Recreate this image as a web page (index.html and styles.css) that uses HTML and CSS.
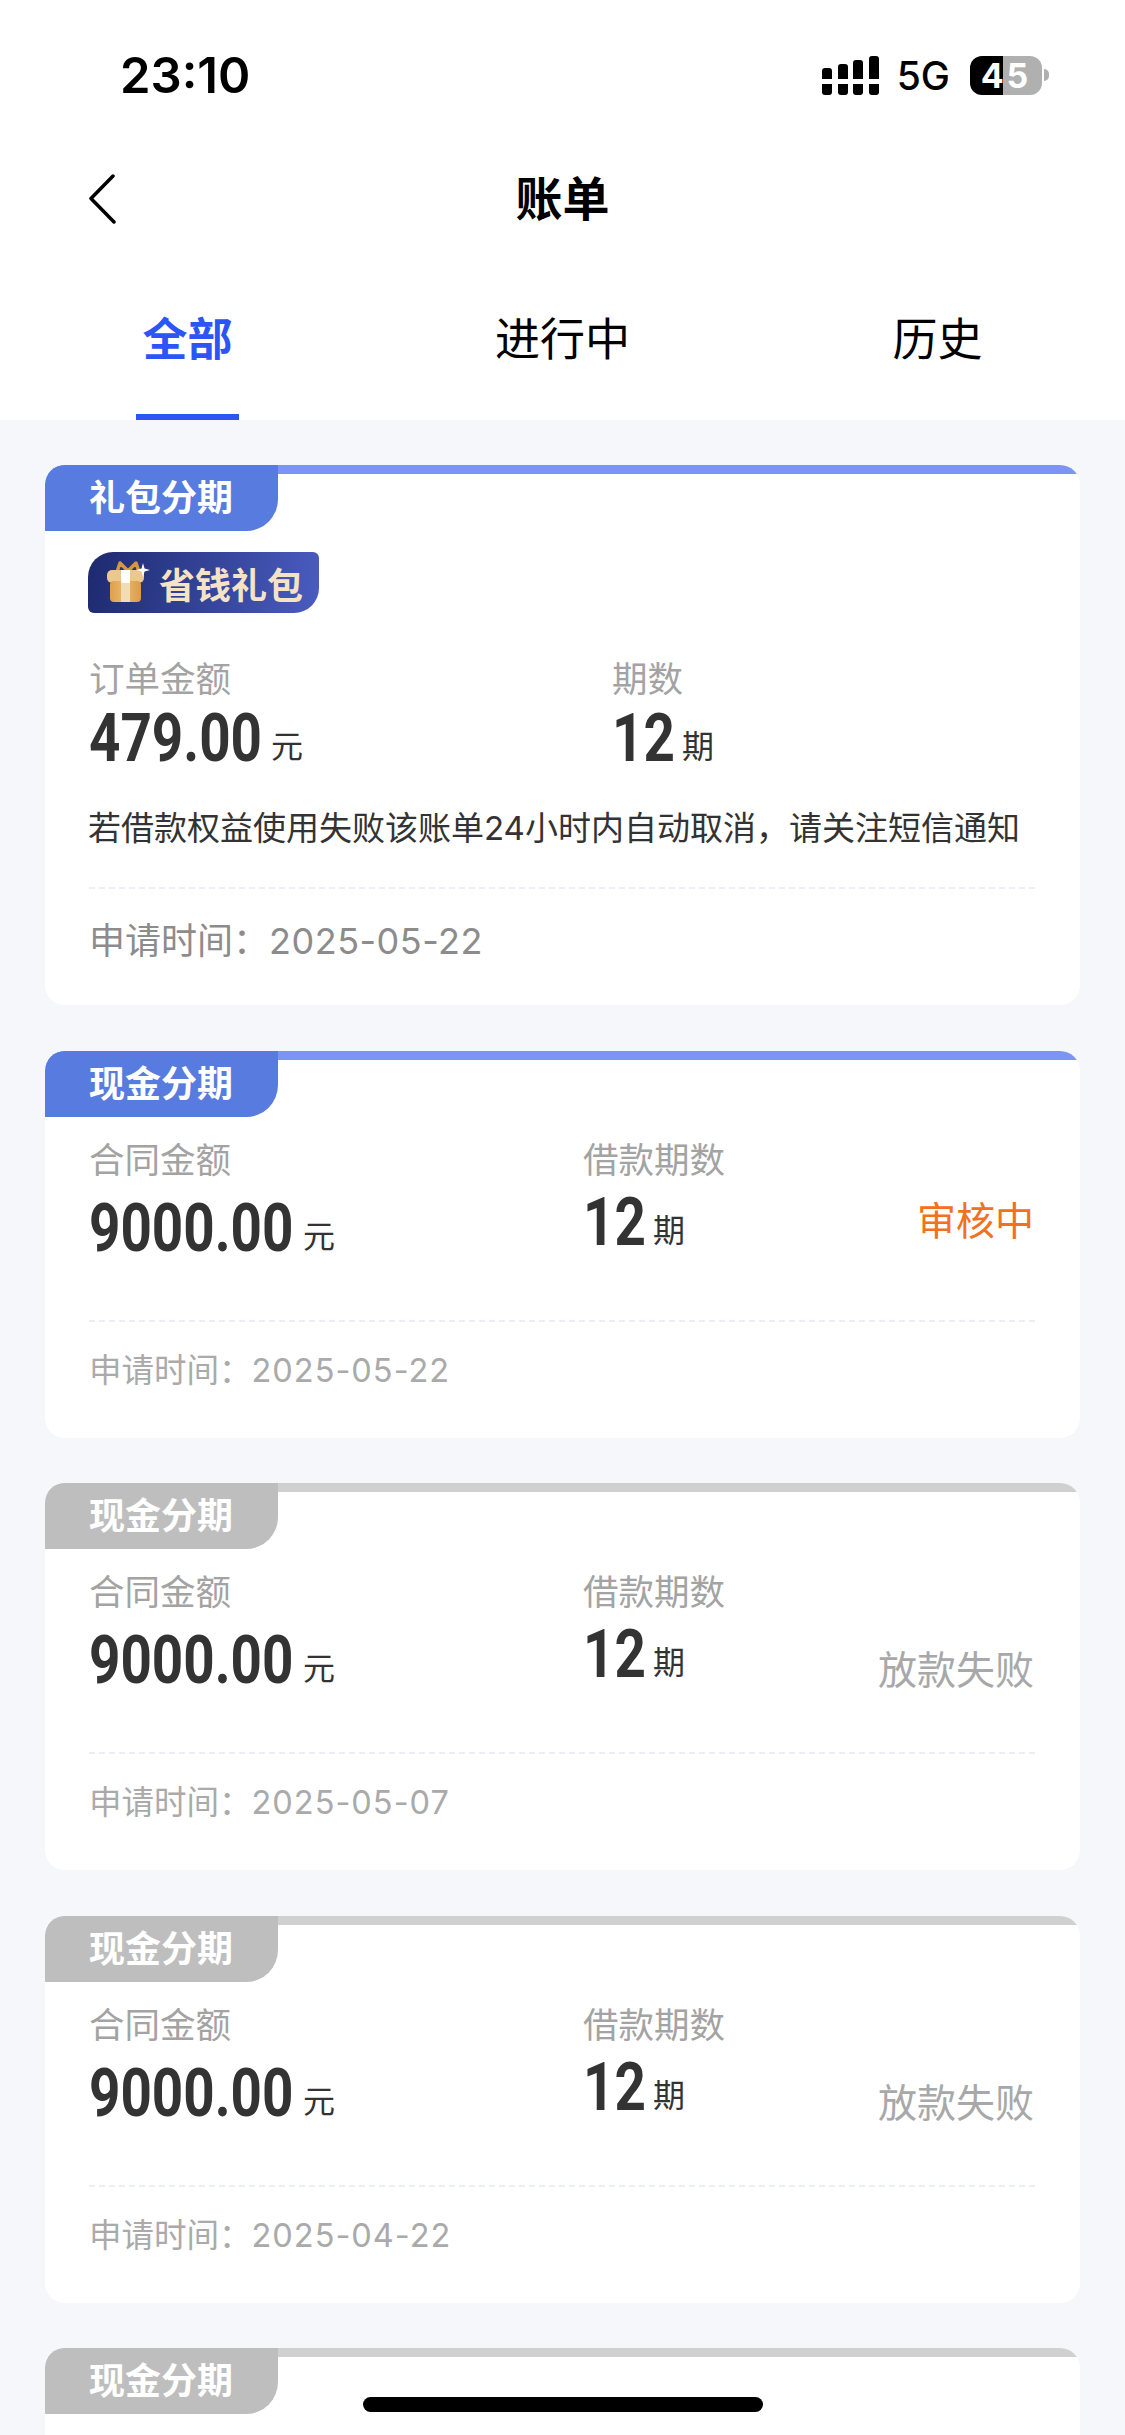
FILE: index.html
```html
<!doctype html>
<html lang="zh-CN">
<head>
	<meta charset="utf-8">
	<title>账单</title>
	<link rel="stylesheet" href="styles.css">
</head>
<body>
	<div class="page">
		<!-- status bar -->
		<div class="status_bar">
			<span class="time">23:10</span>
			<div class="status_right">
				<div class="signal">
					<span class="sig sig1"></span>
					<span class="sig sig2"></span>
					<span class="sig sig3"></span>
					<span class="sig sig4"></span>
				</div>
				<span class="net">5G</span>
				<div class="battery"><span>45</span></div>
				<i class="battery_nub"></i>
			</div>
		</div>

		<!-- title -->
		<div class="nav">
			<svg class="back" width="30" height="50" viewBox="0 0 30 50"><path d="M26 2 L4 24.500 L27 48" fill="none" stroke="#000" stroke-width="3.500" stroke-linecap="round" stroke-linejoin="round"/></svg>
			<span class="nav_title">账单</span>
		</div>

		<!-- tabs -->
		<div class="tabs">
			<div class="tab active"><span>全部</span></div>
			<div class="tab"><span>进行中</span></div>
			<div class="tab"><span>历史</span></div>
		</div>

		<div class="list">
			<!-- gift card -->
			<div class="card card_gift">
				<div class="tag">礼包分期</div>
				<div class="badge">
					<svg class="gift" width="46" height="44" viewBox="0 0 46 44">
						<defs>
							<linearGradient id="box" x1="0" x2="1" y1="0" y2="0">
								<stop offset="0" stop-color="#dfa04a"/>
								<stop offset="0.45" stop-color="#e9b86f"/>
								<stop offset="1" stop-color="#dc9c46"/>
							</linearGradient>
						</defs>
						<path d="M11 11 L14 2 L22 10 L30 2 L33 11" fill="none" stroke="#d9963c" stroke-width="3.500" stroke-linejoin="round"/>
						<rect x="1" y="9" width="37" height="13" rx="5" fill="#ecc88f"/>
						<rect x="4" y="20" width="31" height="21" rx="4" fill="url(#box)"/>
						<rect x="15" y="9" width="9" height="13" fill="#fff"/>
						<rect x="15" y="22" width="9" height="19" fill="#f3dcb4"/>
						<path d="M37 2 L38.500 7.500 L44 9 L38.500 10.500 L37 16 L35.500 10.500 L30 9 L35.500 7.500 Z" fill="#fff"/>
					</svg>
					<span>省钱礼包</span>
				</div>
				<div class="info info_gift">
					<div class="col_amount">
						<div class="label">订单金额</div>
						<div class="value short"><b>479.00</b><em>元</em></div>
					</div>
					<div class="col_term">
						<div class="label">期数</div>
						<div class="value term"><b>12</b><em>期</em></div>
					</div>
				</div>
				<div class="notice">若借款权益使用失败该账单24小时内自动取消，请关注短信通知</div>
				<div class="foot">申请时间：<span class="date">2025-05-22</span></div>
			</div>

			<div class="card">
				<div class="tag">现金分期</div>
				<div class="info">
					<div class="col_amount">
						<div class="label">合同金额</div>
						<div class="value"><b>9000.00</b><em>元</em></div>
					</div>
					<div class="col_term">
						<div class="label">借款期数</div>
						<div class="value term"><b>12</b><em>期</em></div>
					</div>
					<div class="state orange">审核中</div>
				</div>
				<div class="foot">申请时间：<span class="date">2025-05-22</span></div>
			</div>

			<div class="card grey">
				<div class="tag">现金分期</div>
				<div class="info">
					<div class="col_amount">
						<div class="label">合同金额</div>
						<div class="value"><b>9000.00</b><em>元</em></div>
					</div>
					<div class="col_term">
						<div class="label">借款期数</div>
						<div class="value term"><b>12</b><em>期</em></div>
					</div>
					<div class="state">放款失败</div>
				</div>
				<div class="foot">申请时间：<span class="date">2025-05-07</span></div>
			</div>

			<div class="card grey">
				<div class="tag">现金分期</div>
				<div class="info">
					<div class="col_amount">
						<div class="label">合同金额</div>
						<div class="value"><b>9000.00</b><em>元</em></div>
					</div>
					<div class="col_term">
						<div class="label">借款期数</div>
						<div class="value term"><b>12</b><em>期</em></div>
					</div>
					<div class="state">放款失败</div>
				</div>
				<div class="foot">申请时间：<span class="date">2025-04-22</span></div>
			</div>

			<div class="card grey">
				<div class="tag">现金分期</div>
			</div>
		</div>

		<div class="home_bar"></div>
	</div>
</body>
</html>
```

FILE: styles.css
```css
* {
	box-sizing: border-box;
}

html, body {
	margin: 0;
	padding: 0;
}

body {
	font-family: Inter, "Noto Sans CJK SC", sans-serif;
	background-color: #f6f7fb;
}

.page {
	position: relative;
	width: 1125px;
	height: 2435px;
	overflow: hidden;
}

/* status bar */
.status_bar {
	display: flex;
	justify-content: space-between;
	align-items: center;
	height: 150px;
	padding: 0 76px 0 120px;
	background-color: white;
}

.time {
	font-size: 49px;
	font-weight: 600;
	color: #000;
}

.status_right {
	display: flex;
	align-items: center;
}

.signal {
	display: flex;
	gap: 5.500px;
	margin-right: 18px;
}

.sig {
	display: block;
	width: 10px;
	height: 39px;
	border-radius: 3px;
	background: linear-gradient(#000, #000) bottom / 100% 11px no-repeat, linear-gradient(#000, #000) top / 100% 23px no-repeat;
}

.sig1 {
	height: 27px;
	margin-top: 12px;
	background-size: 100% 11px, 100% 11px;
}

.sig2 {
	height: 31px;
	margin-top: 8px;
	background-size: 100% 11px, 100% 15px;
}

.sig3 {
	height: 35px;
	margin-top: 4px;
	background-size: 100% 11px, 100% 19px;
}

.net {
	font-size: 39px;
	font-weight: 500;
	color: #000;
	margin-right: 20px;
}

.battery {
	width: 72px;
	height: 39px;
	border-radius: 12px;
	background: linear-gradient(90deg, #000 46%, #b0b0b0 46%);
	color: white;
	font-size: 34px;
	font-weight: 700;
	letter-spacing: 3px;
	line-height: 39px;
	text-align: center;
}

.battery_nub {
	display: block;
	width: 5px;
	height: 12px;
	margin-left: 2px;
	border-radius: 0 6px 6px 0;
	background-color: #b0b0b0;
}

/* title */
.nav {
	position: relative;
	height: 99px;
	background-color: white;
	text-align: center;
	line-height: 98px;
}

.nav_title {
	font-size: 47px;
	font-weight: 700;
	color: #000;
}

.back {
	position: absolute;
	left: 87px;
	top: 24px;
}

/* tabs */
.tabs {
	display: grid;
	grid-template-columns: repeat(3, 1fr);
	height: 171px;
	background-color: white;
	text-align: center;
}

.tab span {
	display: inline-block;
	height: 171px;
	padding: 58px 6px 0 6px;
	font-size: 45px;
	line-height: 66px;
	color: #000;
}

.tab.active span {
	color: #2d55f5;
	font-weight: 700;
	border-bottom: 6px solid #2d55f5;
}

/* cards */
.list {
	padding: 45px 45px 0 45px;
}

.card {
	--bar: #7e94f5;
	--tag: #577bdf;
	height: 387px;
	margin-bottom: 45.500px;
	padding-bottom: 1px;
	border-radius: 20px;
	background: linear-gradient(var(--bar) 9px, white 9px);
}

.card.grey {
	--bar: #d0d0d0;
	--tag: #bebebe;
}

.card_gift {
	height: 540px;
}

.tag {
	width: 233px;
	height: 66px;
	padding-left: 44px;
	border-radius: 20px 0 32px 0;
	background-color: var(--tag);
	color: white;
	font-size: 36px;
	font-weight: 700;
	line-height: 66px;
}

.badge {
	display: flex;
	align-items: center;
	gap: 7px;
	width: 231px;
	height: 61px;
	margin: 21px 0 0 43px;
	padding-left: 18px;
	border-radius: 25px 6px 25px 6px;
	background: linear-gradient(100deg, #1d2a6e, #4a5cc0);
	color: #f6e3c5;
	font-size: 36px;
	font-weight: 700;
}

.info {
	display: flex;
	align-items: flex-start;
	padding: 23px 46px 0 44px;
}

.info_gift {
	padding-top: 46px;
}

.col_amount {
	width: 494px;
}

.info_gift .col_amount {
	width: 523px;
}

.label {
	font-size: 35.500px;
	line-height: 42px;
	color: #a3a3a3;
}

.value {
	display: flex;
	align-items: baseline;
	height: 72px;
	margin-top: 11px;
	color: #333;
}

.value b {
	display: block;
	width: 204px;
	font-family: Roboto, sans-serif;
	font-size: 66px;
	font-weight: 700;
	line-height: 72px;
	white-space: nowrap;
	/* no condensed font here, so squeeze it */
	transform: scaleX(0.83);
	transform-origin: left center;
}

.value.short b {
	width: 172px;
}

.value.term b {
	width: 60px;
}

.value em {
	margin-left: 10px;
	font-style: normal;
	font-size: 32px;
	transform: translateY(-3px);
}

.value.term {
	margin-top: 5px;
}

.info_gift .value,
.info_gift .value.term {
	margin-top: 2px;
}

.state {
	margin-left: auto;
	margin-top: 67px;
	font-size: 39px;
	color: #a8a8a8;
}

.state.orange {
	margin-top: 50px;
	color: #f37021;
}

.notice {
	margin: 30px 44px 0 43px;
	font-size: 33px;
	line-height: 46px;
	color: #333;
}

.foot {
	margin: 55px 45px 0 44px;
	padding-top: 29px;
	border-top: 2px dashed #eceef7;
	font-size: 32.500px;
	line-height: 40px;
	color: #aaa;
}

.foot .date {
	letter-spacing: 1px;
}

.card_gift .foot {
	margin-top: 36px;
	padding-top: 32px;
	font-size: 36px;
	color: #8c8c8c;
}

.card_gift .foot .date {
	letter-spacing: 0.500px;
}

.home_bar {
	position: absolute;
	left: 363px;
	top: 2397px;
	width: 400px;
	height: 15px;
	border-radius: 8px;
	background-color: #000;
}
```
